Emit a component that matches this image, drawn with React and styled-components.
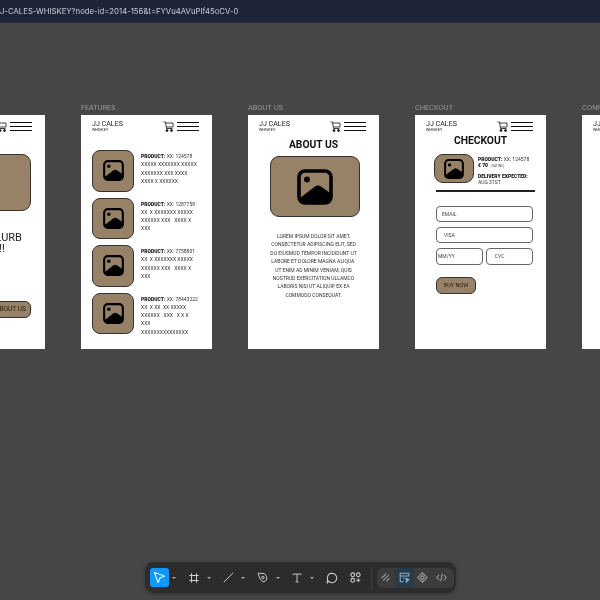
import React from "react";
import styled, { createGlobalStyle } from "styled-components";

const GlobalStyle = createGlobalStyle`
  html, body {
    margin: 0;
    padding: 0;
    width: 600px;
    height: 600px;
    overflow: hidden;
    background: #464646;
  }
`;

const ImageIcon = ({ size }) => (
  <svg width={size} height={size} viewBox="0 0 36 36" style={{ display: "block" }}>
    <rect x="2" y="2" width="32" height="32" rx="6" fill="none" stroke="#000" strokeWidth="3.6" />
    <circle cx="10" cy="10.6" r="3" fill="#000" />
    <path d="M3 32 L3 29 L18 17.5 Q21 15.5 24 17.5 L33 24 L33 30 Q33 33 30 33 L6 33 Q3 33 3 32 Z" fill="#000" />
  </svg>
);

const CartIcon = () => (
  <svg width="11" height="11" viewBox="0 0 22 22" fill="none" stroke="#111" strokeWidth="1.6" style={{ display: "block" }}>
    <path d="M1 2 H5 L7 15 H19" />
    <path d="M5.5 4 H20 V12 H7" />
    <circle cx="8" cy="19" r="2" fill="#111" />
    <circle cx="17" cy="19" r="2" fill="#111" />
  </svg>
);

const Header = () => (
  <HeaderRow>
    <Brand>
      <BrandName>JJ CALES</BrandName>
      <BrandSub>WHISKEY</BrandSub>
    </Brand>
    <HeaderIcons>
      <CartIcon />
      <Burger>
        <span />
        <span />
        <span />
      </Burger>
    </HeaderIcons>
  </HeaderRow>
);

const products = [
  { id: "124578", lines: ["XXXXX XXXXXXX XXXXX", "XXXXXXX XXX XXXX", "XXXX X XXXXXX"] },
  { id: "1287758", lines: ["XX  X XXXXXXX XXXXX", "XXXXXX XXX   XXXX X", "XXX"] },
  { id: "7758801", lines: ["XX  X XXXXXXX XXXXX", "XXXXXX XXX   XXXX X", "XXX"] },
  { id: "78443222", lines: ["XX  X XX  XX XXXXX", "XXXXXX   XXX   X X X", "XXX", "XXXXXXXXXXXXXXX"] },
];

const loremLines = [
  "LOREM IPSUM DOLOR SIT AMET,",
  "CONSECTETUR ADIPISCING ELIT, SED",
  "DO EIUSMOD TEMPOR INCIDIDUNT UT",
  "LABORE ET DOLORE MAGNA ALIQUA.",
  "UT ENIM AD MINIM VENIAM, QUIS",
  "NOSTRUD EXERCITATION ULLAMCO",
  "LABORIS NISI UT ALIQUIP EX EA",
  "COMMODO CONSEQUAT.",
];

const App = () => (
  <Page>
    <GlobalStyle />
    <AddressBar>J-CALES-WHISKEY?node-id=2014-156&amp;t=FYVu4AVuPIf45oCV-0</AddressBar>
    <Canvas>
      <FrameColumn>
        <FrameLabel>HOME</FrameLabel>
        <Frame>
          <Header />
          <HomeHero />
          <Blurb>
            PRODUCT BLURB
            <br />
            GO HERE!!
          </Blurb>
          <HomeButton>ABOUT US</HomeButton>
        </Frame>
      </FrameColumn>

      <FrameColumn>
        <FrameLabel>FEATURES</FrameLabel>
        <Frame>
          <Header />
          <ProductList>
            {products.map((p) => (
              <ProductRow key={p.id}>
                <Thumb>
                  <ImageIcon size={21} />
                </Thumb>
                <ProductText>
                  <b>PRODUCT:</b> XX: {p.id}
                  {p.lines.map((l, i) => (
                    <div key={i}>{l}</div>
                  ))}
                </ProductText>
              </ProductRow>
            ))}
          </ProductList>
        </Frame>
      </FrameColumn>

      <FrameColumn>
        <FrameLabel>ABOUT US</FrameLabel>
        <Frame>
          <Header />
          <AboutTitle>ABOUT US</AboutTitle>
          <AboutHero>
            <ImageIcon size={36} />
          </AboutHero>
          <Lorem>
            {loremLines.map((l) => (
              <div key={l}>{l}</div>
            ))}
          </Lorem>
        </Frame>
      </FrameColumn>

      <FrameColumn>
        <FrameLabel>CHECKOUT</FrameLabel>
        <Frame>
          <Header />
          <CheckoutTitle>CHECKOUT</CheckoutTitle>
          <Summary>
            <SummaryThumb>
              <ImageIcon size={20} />
            </SummaryThumb>
            <SummaryText>
              <div>
                <b>PRODUCT:</b> XX: 124578
              </div>
              <div>
                <b>€ 70</b> <Vat>(VAT INC)</Vat>
              </div>
              <Delivery>
                <b>DELIVERY EXPECTED:</b>
              </Delivery>
              <div>AUG 31ST</div>
            </SummaryText>
          </Summary>
          <Divider />
          <Form>
            <Field>EMAIL</Field>
            <Field $inset={7}>VISA</Field>
            <FieldRow>
              <Field $inset={1}>MM/YY</Field>
              <Field $inset={8}>CVC</Field>
            </FieldRow>
          </Form>
          <BuyButton>BUY NOW</BuyButton>
        </Frame>
      </FrameColumn>

      <FrameColumn>
        <FrameLabel>CONFIRMATION</FrameLabel>
        <Frame>
          <Header />
        </Frame>
      </FrameColumn>
    </Canvas>

    <Toolbar>
      <ActiveTool>
        <svg width="13" height="13" viewBox="0 0 14 14" fill="none" stroke="#fff" strokeWidth="1.1">
          <path d="M1.5 1.5 L12.5 5.5 L7.5 7.5 L5.5 12.5 Z" strokeLinejoin="round" />
        </svg>
      </ActiveTool>
      <Caret />
      <Tool>
        <svg width="10" height="10" viewBox="0 0 14 14" fill="none" stroke="#d0d0d0" strokeWidth="1.4">
          <path d="M3.5 0.5 V13.5 M10.5 0.5 V13.5 M0.5 3.5 H13.5 M0.5 10.5 H13.5" />
        </svg>
      </Tool>
      <Caret />
      <Tool>
        <svg width="11" height="11" viewBox="0 0 14 14" fill="none" stroke="#d0d0d0" strokeWidth="1.2">
          <path d="M1 13 L13 1" />
        </svg>
      </Tool>
      <Caret />
      <Tool>
        <svg width="11" height="11" viewBox="0 0 14 14" fill="none" stroke="#d0d0d0" strokeWidth="1.2">
          <path d="M1.5 1.5 L9.5 2 Q13 5 12.5 9 Q11 12.5 8 12.5 Q3 10 1.5 1.5 Z" />
          <circle cx="7.5" cy="7" r="1.6" />
        </svg>
      </Tool>
      <Caret />
      <Tool>
        <svg width="10" height="10" viewBox="0 0 14 14" fill="none" stroke="#d0d0d0" strokeWidth="1.3">
          <path d="M1.5 3 V1.5 H12.5 V3 M7 1.5 V12.5 M5 12.5 H9" />
        </svg>
      </Tool>
      <Caret />
      <Tool>
        <svg width="12" height="12" viewBox="0 0 14 14" fill="none" stroke="#d0d0d0" strokeWidth="1.2">
          <path d="M7 1.5 A5.5 5.5 0 1 1 2.8 10.6 L1.5 12.5 L1.7 6.5 A5.5 5.5 0 0 1 7 1.5 Z" />
        </svg>
      </Tool>
      <Tool>
        <svg width="11" height="11" viewBox="0 0 14 14" fill="none" stroke="#d0d0d0" strokeWidth="1.3">
          <circle cx="3.5" cy="3.5" r="2.4" />
          <circle cx="10.5" cy="3.5" r="2.4" />
          <circle cx="3.5" cy="10.5" r="2.4" />
          <path d="M10.5 8 V13 M8 10.5 H13" />
        </svg>
      </Tool>
      <ToolDivider />
      <ModeGroup>
        <Mode>
          <svg width="11" height="11" viewBox="0 0 14 14" fill="none" stroke="#a0a0a0" strokeWidth="1.3">
            <path d="M2 8 L8 2 M4 11 L11 4 M8 12 L12 8" />
          </svg>
        </Mode>
        <Mode $active>
          <svg width="11" height="11" viewBox="0 0 14 14" fill="none" stroke="#7fb4e0" strokeWidth="1.3">
            <path d="M1.5 1.5 H12.5 V5 H1.5 Z M1.5 5 V12.5 H6 M5 8 H7" />
            <path d="M9 8 L13 10 L10.5 11 L9.5 13 Z" fill="#7fb4e0" />
          </svg>
        </Mode>
        <Mode>
          <svg width="11" height="11" viewBox="0 0 14 14" fill="none" stroke="#a0a0a0" strokeWidth="1.3">
            <path d="M7 1 L13 7 L7 13 L1 7 Z M4.5 7 L7 4.5 L9.5 7 L7 9.5 Z" />
          </svg>
        </Mode>
        <Mode>
          <svg width="11" height="11" viewBox="0 0 14 14" fill="none" stroke="#a0a0a0" strokeWidth="1.3">
            <path d="M4 3.5 L1 7 L4 10.5 M10 3.5 L13 7 L10 10.5 M8 2 L6 12" />
          </svg>
        </Mode>
      </ModeGroup>
    </Toolbar>
  </Page>
);

const Page = styled.div`
  position: relative;
  width: 600px;
  height: 600px;
  overflow: hidden;
  background: #464646;
  font-family: Roboto, "Liberation Sans", sans-serif;
  /* the reference is a soft, compressed capture */
  filter: blur(0.35px);
`;

const AddressBar = styled.div`
  height: 23px;
  box-sizing: border-box;
  background: #1f2438;
  color: #c9cdd8;
  font: 7.75px/23px Inter, "Liberation Sans", sans-serif;
  white-space: nowrap;
  border-bottom: 1px solid #2a2e42;
`;

const Canvas = styled.div`
  display: flex;
  gap: 36px;
  margin-left: -86px;
  padding-top: 81px;
`;

const FrameColumn = styled.div`
  flex: 0 0 131px;
`;

const FrameLabel = styled.div`
  height: 11px;
  color: #a0a0a0;
  font: 6.8px/8px Inter, "Liberation Sans", sans-serif;
  white-space: nowrap;
`;

const Frame = styled.div`
  box-sizing: border-box;
  width: 131px;
  height: 234px;
  padding-top: 6px;
  background: #ffffff;
  color: #222222;
  overflow: hidden;
`;

const HeaderRow = styled.div`
  display: flex;
  justify-content: space-between;
  align-items: flex-start;
  height: 11px;
  padding: 0 13px 0 11px;
`;

const Brand = styled.div`
  margin-top: -1px;
  color: #222222;
`;

const BrandName = styled.div`
  font: 7.1px/8px Roboto, sans-serif;
`;

const BrandSub = styled.div`
  font: 3.8px/3px Roboto, sans-serif;
`;

const HeaderIcons = styled.div`
  display: flex;
  gap: 3px;
  align-items: center;
`;

const Burger = styled.div`
  display: flex;
  flex-direction: column;
  gap: 2.6px;
  width: 22px;
  span {
    display: block;
    height: 1.4px;
    background: #111111;
  }
`;

const tan = "#978167";
const outline = "#333333";

const HomeHero = styled.div`
  width: 102px;
  height: 57px;
  margin: 22px 0 0 15px;
  background: ${tan};
  border: 1px solid ${outline};
  box-sizing: border-box;
  border-radius: 9px;
`;

const Blurb = styled.div`
  margin-top: 20.5px;
  text-align: center;
  font: 11px/11px Roboto, sans-serif;
  color: #222222;
  white-space: nowrap;
`;

const HomeButton = styled.div`
  box-sizing: border-box;
  width: 76px;
  height: 17px;
  margin: 47px 0 0 41px;
  padding-right: 4px;
  background: ${tan};
  border: 1px solid ${outline};
  border-radius: 6px;
  font: 400 6.6px/15px Roboto, sans-serif;
  text-align: right;
  color: #2a2118;
`;

const ProductList = styled.div`
  display: flex;
  flex-direction: column;
  gap: 6px;
  margin: 18px 0 0 11px;
`;

const ProductRow = styled.div`
  display: flex;
  gap: 7px;
`;

const Thumb = styled.div`
  flex: 0 0 42px;
  height: 41.5px;
  box-sizing: border-box;
  display: flex;
  align-items: center;
  justify-content: center;
  background: ${tan};
  border: 1px solid ${outline};
  border-radius: 8px;
`;

const ProductText = styled.div`
  font: 5px/8.3px Roboto, sans-serif;
  color: #333333;
  padding-top: 2px;
  white-space: pre;
  b {
    font-weight: 900;
    color: #111111;
  }
`;

const AboutTitle = styled.div`
  margin-top: 6px;
  text-align: center;
  font: 700 10.3px/14px Roboto, sans-serif;
  color: #111111;
`;

const AboutHero = styled.div`
  box-sizing: border-box;
  width: 90px;
  height: 61px;
  margin: 4px 0 0 22px;
  display: flex;
  align-items: center;
  justify-content: center;
  background: ${tan};
  border: 1px solid ${outline};
  border-radius: 9px;
`;

const Lorem = styled.div`
  margin-top: 15px;
  text-align: center;
  font: 5px/8.4px Roboto, sans-serif;
  color: #333333;
  white-space: nowrap;
`;

const CheckoutTitle = styled.div`
  margin-top: 1.5px;
  text-align: center;
  font: 700 10.3px/13px Roboto, sans-serif;
  color: #111111;
`;

const Summary = styled.div`
  display: flex;
  gap: 4px;
  margin: 7.5px 0 0 19px;
`;

const SummaryThumb = styled.div`
  flex: 0 0 40px;
  height: 29px;
  box-sizing: border-box;
  display: flex;
  align-items: center;
  justify-content: center;
  background: ${tan};
  border: 1px solid ${outline};
  border-radius: 9px;
`;

const SummaryText = styled.div`
  font: 5px/6.3px Roboto, sans-serif;
  color: #333333;
  padding-top: 2px;
  white-space: nowrap;
  b {
    font-weight: 900;
    color: #111111;
  }
`;

const Vat = styled.span`
  font-size: 3px;
  margin-left: 2px;
`;

const Delivery = styled.div`
  margin-top: 3.5px;
`;

const Divider = styled.div`
  height: 1.4px;
  margin: 4.5px 11px 0 21px;
  background: #222222;
`;

const Form = styled.div`
  display: flex;
  flex-direction: column;
  gap: 5px;
  margin: 14px 13px 0 21px;
`;

const Field = styled.div`
  box-sizing: border-box;
  min-height: 16.4px;
  padding-left: ${(p) => p.$inset ?? 5}px;
  border: 1px solid #666666;
  border-radius: 4px;
  font: 5px/14.4px Roboto, sans-serif;
  color: #444444;
`;

const FieldRow = styled.div`
  display: grid;
  grid-template-columns: 1fr 1fr;
  gap: 2.5px;
`;

const BuyButton = styled.div`
  box-sizing: border-box;
  width: 40px;
  height: 17px;
  margin: 12.5px 0 0 21px;
  background: ${tan};
  border: 1px solid ${outline};
  border-radius: 6px;
  font: 400 5.6px/15px Roboto, sans-serif;
  text-align: center;
  color: #2a2118;
`;

const Toolbar = styled.div`
  position: absolute;
  left: 145px;
  top: 562px;
  width: 311px;
  height: 31px;
  box-sizing: border-box;
  display: flex;
  align-items: center;
  padding: 0 2px 0 5px;
  border-radius: 9px;
  background: #2c2c2c;
  box-shadow: 0 1px 5px rgba(0, 0, 0, 0.3);
`;

const ActiveTool = styled.div`
  flex: none;
  width: 19px;
  height: 19px;
  display: flex;
  align-items: center;
  justify-content: center;
  background: #0d99ff;
  border-radius: 3px;
  margin-right: -3px;
`;

const Tool = styled.div`
  flex: none;
  width: 14px;
  height: 20px;
  display: flex;
  align-items: center;
  justify-content: center;

  & + & {
    margin-left: 10px;
  }
`;

const Caret = styled.div`
  flex: none;
  width: 0;
  height: 0;
  margin: 0 10.5px 0 6px;
  border-left: 2px solid transparent;
  border-right: 2px solid transparent;
  border-top: 2px solid #aaaaaa;
`;

const ToolDivider = styled.div`
  flex: none;
  width: 1px;
  height: 24px;
  margin: 0 5px 0 8px;
  background: #3d3d3d;
`;

const ModeGroup = styled.div`
  display: flex;
  align-items: center;
  height: 20px;
  padding-right: 3px;
  border-radius: 6px;
  background: #3c3c3c;
`;

const Mode = styled.div`
  width: 18.5px;
  height: 20px;
  display: flex;
  align-items: center;
  justify-content: center;
  background: ${(p) => (p.$active ? "#2b3a46" : "transparent")};
`;

export default App;
